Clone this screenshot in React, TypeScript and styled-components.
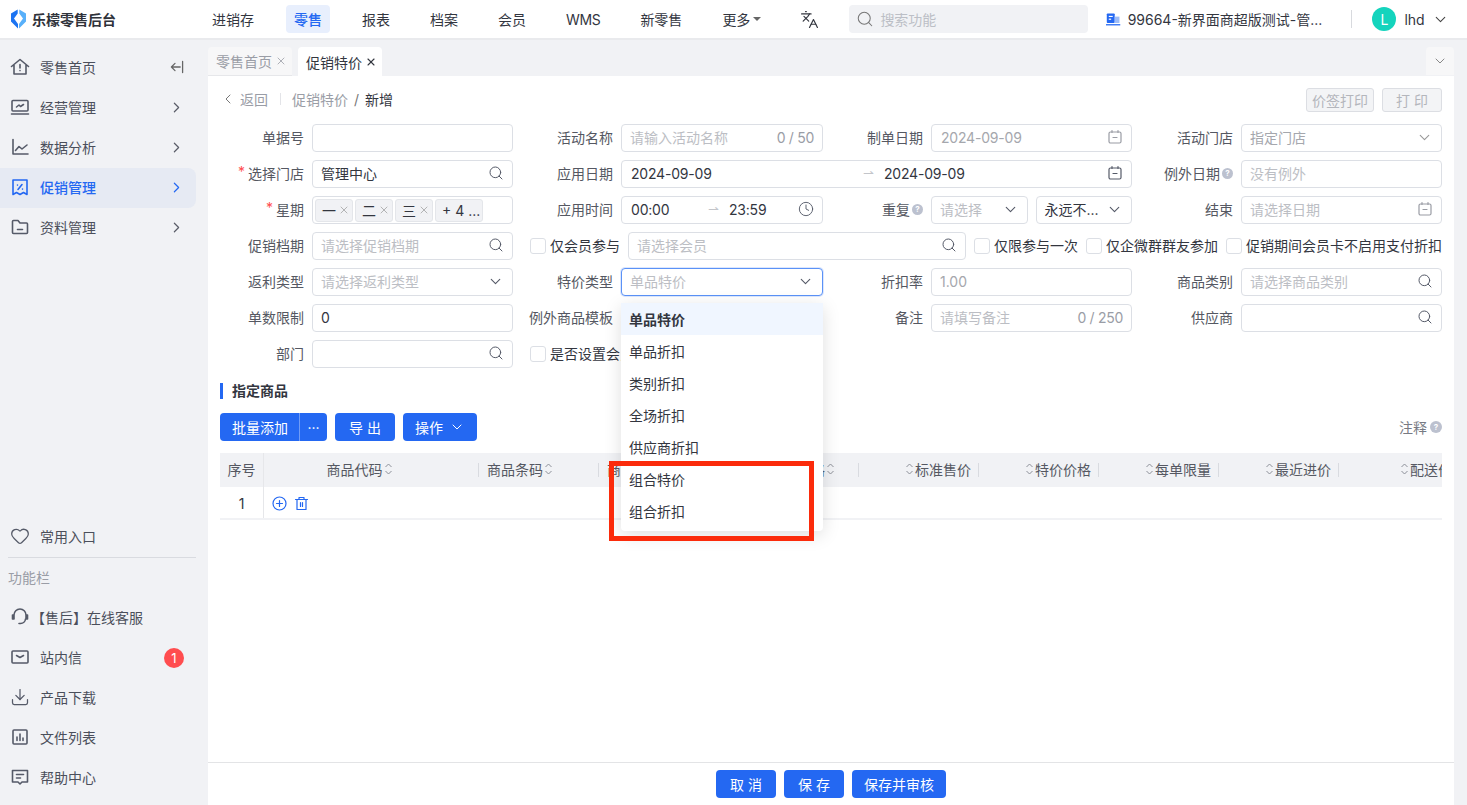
import React from 'react'
import styled, { createGlobalStyle } from 'styled-components'
import { Search, ChevronDown, ChevronRight, ChevronLeft, X, Clock, Languages, Heart, Download } from 'lucide-react'

const GlobalStyle = createGlobalStyle`
  html, body { margin: 0; padding: 0; height: 100%; }
  body {
    font-family: "Inter", "Noto Sans CJK SC", sans-serif;
    font-size: 14px;
    color: #33363f;
    background: #f1f2f5;
    overflow: hidden;
  }
  * { box-sizing: border-box; }
`

const BLUE = '#2468f2'

const Page = styled.div`
  position: relative;
  width: 100%;
  height: 100vh;
  display: flex;
  flex-direction: column;
  overflow: hidden;
`

/* ---------- top bar ---------- */

const TopBar = styled.header`
  flex: 0 0 40px;
  display: flex;
  align-items: center;
  background: #fff;
  border-bottom: 2px solid #e9eaed;
`

const Brand = styled.div`
  flex: 0 0 204px;
  display: flex;
  align-items: center;
  gap: 6px;
  padding-left: 11px;
  font-weight: 600;
  color: #2f323a;
`

const Nav = styled.nav`
  display: flex;
  gap: 24px;
`

const NavItem = styled.div<{ $active?: boolean; $latin?: boolean }>`
  height: 28px;
  padding: 0 8px;
  display: flex;
  align-items: center;
  gap: 3px;
  border-radius: 4px;
  letter-spacing: ${p => (p.$latin ? '-.35px' : 'normal')};
  color: ${p => (p.$active ? BLUE : '#33363f')};
  background: ${p => (p.$active ? '#e8effd' : 'transparent')};
  font-weight: ${p => (p.$active ? 500 : 400)};
`

const Caret = styled.span`
  width: 0;
  height: 0;
  border-left: 4px solid transparent;
  border-right: 4px solid transparent;
  border-top: 4px solid #666;
`

const LangButton = styled.div`
  margin-left: 31px;
  display: flex;
  color: #33363f;
`

const SearchBox = styled.div`
  margin-left: 30px;
  width: 239px;
  height: 28px;
  padding-left: 7px;
  display: flex;
  align-items: center;
  gap: 6px;
  border-radius: 4px;
  background: #f1f2f5;
  color: #bcbfc6;
  svg { color: #777; }
`

const StoreInfo = styled.div`
  margin-left: 18px;
  width: 216px;
  display: flex;
  align-items: center;
  gap: 7px;
  white-space: nowrap;
  color: #33363f;
`

const HeadSep = styled.span`
  margin-left: 29px;
  width: 1px;
  height: 18px;
  background: #d8dade;
`

const Avatar = styled.div`
  margin-left: 20px;
  width: 24px;
  height: 24px;
  border-radius: 50%;
  background: #14d4bd;
  color: #fff;
  display: flex;
  align-items: center;
  justify-content: center;
`

const UserName = styled.span`
  margin-left: 8px;
  margin-right: 7px;
`

/* ---------- sidebar ---------- */

const Body = styled.div`
  flex: 1;
  min-height: 0;
  display: flex;
`

const Sidebar = styled.aside`
  flex: 0 0 208px;
  padding: 8px 12px 7px 0;
  display: flex;
  flex-direction: column;
  background: #f1f2f5;
`

const SideBottom = styled.div`
  margin-top: auto;
`

const SideItem = styled.div<{ $active?: boolean; $tight?: boolean }>`
  height: 40px;
  padding: 0 11px 2px 10px;
  display: flex;
  align-items: center;
  gap: ${p => (p.$tight ? '1px' : '10px')};
  border-radius: 0 8px 8px 0;
  color: ${p => (p.$active ? BLUE : '#4b4f5b')};
  background: ${p => (p.$active ? '#e6eaf3' : 'transparent')};
  font-weight: ${p => (p.$active ? 500 : 400)};
  white-space: nowrap;
  & > svg { flex: none; }
`

const SideLabel = styled.span`
  flex: 1;
`

const SideRule = styled.div`
  margin-left: 8px;
  height: 1px;
  background: #d9dbe0;
`

const SideHeading = styled.div`
  height: 40px;
  padding: 0 0 2px 8px;
  display: flex;
  align-items: center;
  color: #9a9da6;
`

const Badge = styled.span`
  width: 20px;
  height: 20px;
  margin: 2px 1px 0 0;
  border-radius: 50%;
  background: #ff4d4f;
  color: #fff;
  font-size: 13px;
  display: flex;
  align-items: center;
  justify-content: center;
`

/* ---------- tabs ---------- */

const Main = styled.main`
  flex: 1;
  min-width: 0;
  display: flex;
  flex-direction: column;
`

const TabBar = styled.div`
  flex: 0 0 36px;
  padding-top: 7px;
  padding-right: 13px;
  display: flex;
  gap: 6px;
  background: #f1f2f5;
`

const Tab = styled.div<{ $active?: boolean }>`
  width: 84px;
  height: 29px;
  padding-left: 8px;
  display: flex;
  align-items: center;
  gap: 3px;
  border-radius: 4px 4px 0 0;
  white-space: nowrap;
  background: ${p => (p.$active ? '#fff' : '#f7f7f8')};
  color: ${p => (p.$active ? '#33363f' : '#9a9da6')};
  border-bottom: ${p => (p.$active ? 'none' : '1px solid #e6e7ea')};
`

const TabMore = styled.div`
  margin-left: auto;
  width: 28px;
  height: 28px;
  display: flex;
  align-items: center;
  justify-content: center;
  border-radius: 4px 4px 0 0;
  background: #f7f7f8;
  color: #888;
`

/* ---------- content ---------- */

const Content = styled.section`
  flex: 1;
  min-height: 0;
  margin-right: 13px;
  display: flex;
  flex-direction: column;
  background: #fff;
`

const Scroll = styled.div`
  flex: 1;
  min-height: 0;
  padding: 0 12px;
`

const CrumbBar = styled.div`
  height: 48px;
  display: flex;
  align-items: center;
`

const CrumbText = styled.div`
  padding-bottom: 2px;
  display: flex;
  align-items: center;
`

const Crumb = styled.span<{ $current?: boolean }>`
  color: ${p => (p.$current ? '#33363f' : '#9a9da6')};
`

const CrumbBack = styled.div`
  display: flex;
  align-items: center;
  gap: 4px;
  color: #9a9da6;
`

const CrumbSep = styled.span`
  margin: 0 11px 0 12px;
  width: 1px;
  height: 12px;
  background: #e3e4e8;
`

const CrumbSlash = styled.span`
  margin: 0 6px;
  color: #777;
`

const CrumbActions = styled.div`
  margin-left: auto;
  display: flex;
  gap: 8px;
`

const GhostButton = styled.div<{ $w: number }>`
  width: ${p => p.$w}px;
  height: 24px;
  display: flex;
  align-items: center;
  justify-content: center;
  border: 1px solid #dcdee3;
  border-radius: 3px;
  background: #f3f4f6;
  color: #b4b6bc;
  white-space: nowrap;
`

const FormGrid = styled.div`
  display: grid;
  grid-template-columns: 92px 201px 108px 202px 108px 201px 109px 201px;
  grid-auto-rows: 28px;
  row-gap: 8px;
`

const Label = styled.div`
  padding: 0 8px 2px 0;
  display: flex;
  align-items: center;
  justify-content: flex-end;
  gap: 2px;
  white-space: nowrap;
  color: #555862;
`

const Star = styled.span`
  color: #ff4d4f;
  margin-right: 1px;
  align-self: flex-start;
  padding-top: 3px;
`

const Help = styled.span<{ $size?: number }>`
  width: ${p => p.$size ?? 11}px;
  height: ${p => p.$size ?? 11}px;
  border-radius: 50%;
  background: #bcc1cf;
  color: #fff;
  font-size: 8px;
  font-weight: 700;
  display: inline-flex;
  align-items: center;
  justify-content: center;
`

const Field = styled.div<{ $span?: number; $focused?: boolean }>`
  position: relative;
  grid-column: span ${p => p.$span ?? 1};
  min-width: 0;
  height: 28px;
  padding: 0 8px 2px 8px;
  display: flex;
  align-items: center;
  border: 1px solid ${p => (p.$focused ? '#5b92f7' : '#dcdfe5')};
  border-radius: 4px;
  background: #fff;
  color: #555;
  box-shadow: ${p => (p.$focused ? '0 0 0 1px rgba(36,104,242,.16)' : 'none')};
  white-space: nowrap;
  & > svg { flex: none; }
`

const Value = styled.span<{ $tone?: 'hint' | 'muted'; $width?: number }>`
  flex: ${p => (p.$width ? `0 0 ${p.$width}px` : '1')};
  min-width: 0;
  color: ${p => (p.$tone === 'hint' ? '#bcbec4' : p.$tone === 'muted' ? '#a5a7ad' : '#33363f')};
`

const DateValue = styled(Value)`
  padding-left: 1px;
  letter-spacing: -.2px;
`

const Counter = styled.span`
  color: #9a9da6;
  letter-spacing: -.3px;
`

const Arrow = styled.span`
  flex: none;
  width: 22px;
  padding-left: 2px;
  color: #c3c5ca;
  font-size: 13px;
`

const SplitField = styled.div`
  min-width: 0;
  display: flex;
  gap: 8px;
  & > * { flex: 1; }
`

const TagField = styled(Field)`
  padding: 0 2px;
  gap: 2px;
`

const Tag = styled.span`
  height: 23px;
  padding: 0 2px 0 6px;
  display: flex;
  align-items: center;
  gap: 2px;
  border: 1px solid #e4e6ea;
  border-radius: 3px;
  background: #f1f2f5;
  color: #33363f;
  svg { color: #888; }
`

const CheckRow = styled.div`
  grid-column: 3 / -1;
  padding: 0 0 2px 17px;
  display: flex;
  align-items: center;
  gap: 8px;
  white-space: nowrap;
`

const CheckItem = styled.label`
  display: flex;
  align-items: center;
  gap: 4px;
  color: #33363f;
`

const Box = styled.span`
  width: 16px;
  height: 16px;
  margin-top: 2px;
  border: 1px solid #dcdfe5;
  border-radius: 3px;
  background: #fff;
`

const MemberField = styled(Field)`
  flex: 1;
  margin: 2px 0 0 0;
`

const Menu = styled.ul`
  position: absolute;
  z-index: 5;
  left: -1px;
  right: -1px;
  top: 34px;
  margin: 0;
  padding: 0 0 4px;
  list-style: none;
  border-radius: 0 0 4px 4px;
  background: #fff;
  box-shadow: 0 4px 18px rgba(0, 0, 0, .13);
`

const MenuItem = styled.li<{ $selected?: boolean }>`
  height: 32px;
  padding-left: 8px;
  display: flex;
  align-items: center;
  color: #33363f;
  background: ${p => (p.$selected ? '#f0f6ff' : '#fff')};
  font-weight: ${p => (p.$selected ? 600 : 400)};
`

const SectionTitle = styled.h3`
  margin: 15px 0 14px;
  height: 16px;
  padding: 0 0 3px 9px;
  display: flex;
  align-items: center;
  border-left: 3px solid ${BLUE};
  font-size: 14px;
  font-weight: 600;
  color: #33363f;
`

const Toolbar = styled.div`
  height: 28px;
  margin-bottom: 12px;
  display: flex;
  align-items: center;
  gap: 8px;
`

const PrimaryButton = styled.div<{ $min?: number }>`
  min-width: ${p => p.$min ?? 0}px;
  height: 28px;
  padding: 0 12px;
  display: flex;
  align-items: center;
  justify-content: center;
  gap: 6px;
  border-radius: 4px;
  background: ${BLUE};
  color: #fff;
  white-space: nowrap;
`

const ButtonGroup = styled.div`
  display: flex;
  border-radius: 4px;
  overflow: hidden;
  & > div { border-radius: 0; }
  & > div:first-child { padding: 0 11px 0 12px; width: 79px; }
  & > div + div { border-left: 1px solid rgba(255, 255, 255, .35); padding: 0; width: 28px; }
`

const NoteLink = styled.div`
  margin-left: auto;
  display: flex;
  align-items: center;
  gap: 3px;
  color: #777a83;
`

/* ---------- table ---------- */

const TableWrap = styled.div`
  width: 1222px;
  overflow: hidden;
`

const HeadRow = styled.div`
  display: flex;
  height: 34px;
  background: #f1f2f5;
`

const HeadCell = styled.div<{ $w: number; $align: string; $pl?: number; $pr?: number; $line?: boolean }>`
  position: relative;
  flex: 0 0 ${p => p.$w}px;
  padding: 0 ${p => p.$pr ?? 8}px 2px ${p => p.$pl ?? 8}px;
  display: flex;
  align-items: center;
  justify-content: ${p => p.$align};
  gap: 1px;
  color: #555862;
  white-space: nowrap;
  &::after {
    content: '';
    display: ${p => (p.$line ? 'block' : 'none')};
    position: absolute;
    right: 0;
    top: 10px;
    width: 1px;
    height: 14px;
    background: #d9dbe0;
  }
`

const IndexHead = styled(HeadCell)`
  border-right: 1px solid #e6e7ea;
  padding: 0 0 2px;
`

const DataRow = styled.div`
  display: flex;
  height: 33px;
  border-bottom: 2px solid #f1f2f5;
`

const IndexCell = styled.div`
  flex: 0 0 44px;
  padding-top: 1px;
  display: flex;
  align-items: center;
  justify-content: center;
  border-right: 1px solid #e6e7ea;
  color: #33363f;
`

const ActionCell = styled.div`
  padding: 2px 0 0 8px;
  display: flex;
  align-items: center;
  gap: 7px;
  color: ${BLUE};
`

const Footer = styled.footer`
  flex: 0 0 43px;
  display: flex;
  align-items: center;
  justify-content: center;
  gap: 8px;
  border-top: 1px solid #e3e4e6;
`

const RedFrame = styled.div`
  position: absolute;
  z-index: 6;
  left: 609px;
  top: 461px;
  width: 205px;
  height: 80px;
  border: 5px solid #fb2b0b;
  pointer-events: none;
`

/* ---------- drawings ---------- */

const Ico: React.FC<{ children: React.ReactNode; size?: number; color?: string }> = ({ children, size = 20, color = '#555a68' }) => (
  <svg width={size} height={size} viewBox="0 0 20 20" fill="none" stroke={color} strokeWidth="1.6" strokeLinecap="round" strokeLinejoin="round">
    {children}
  </svg>
)

const Logo = () => (
  <svg width="15" height="20" viewBox="0 0 15 20">
    <path d="M6.7 0.5 V4.6 L3 9.6 L7 15 V19.5 L0 12.5 V4.6 Z" fill="#1c74f2" />
    <path d="M8.3 0.5 L15 4.6 V12.5 L8 19.5 V15 L12 9.6 L8.3 4.6 Z" fill="#58b0fa" />
  </svg>
)

const StoreIcon = () => (
  <svg width="18" height="18" viewBox="0 0 18 18">
    <rect x="1" y="2" width="10" height="12" rx="1" fill="#2468f2" />
    <rect x="11" y="6" width="6" height="8" fill="#9dbcf8" />
    <rect x="3.5" y="5" width="5" height="1.5" fill="#fff" />
    <rect x="3.5" y="8.5" width="3" height="1.5" fill="#fff" />
    <rect x="0" y="15.5" width="18" height="1.6" fill="#2468f2" />
  </svg>
)

const CalendarIcon: React.FC<{ color?: string }> = ({ color = '#999ca4' }) => (
  <svg width="16" height="16" viewBox="0 0 16 16" fill="none" stroke={color} strokeWidth="1.2" strokeLinecap="round">
    <rect x="2" y="3" width="12" height="11" rx="1.5" />
    <path d="M5 1.5 V3.5 M11 1.5 V3.5 M6 8.5 H10" />
  </svg>
)

const SortIcon = () => (
  <svg width="9" height="14" viewBox="0 0 9 14" fill="none" stroke="#8d9099" strokeWidth="1">
    <path d="M1.5 5 L4.5 2 L7.5 5 M1.5 9 L4.5 12 L7.5 9" />
  </svg>
)

const columns = [
  { title: '商品代码', w: 215, align: 'center', pr: 32, sort: 'after' },
  { title: '商品条码', w: 120, align: 'flex-start', sort: 'after' },
  { title: '商品名称', w: 110, align: 'flex-start', sort: 'after' },
  { title: '商品规格', w: 150, align: 'center', pl: 44, sort: 'after' },
  { title: '标准售价', w: 120, align: 'flex-end', sort: 'before' },
  { title: '特价价格', w: 120, align: 'flex-end', sort: 'before' },
  { title: '每单限量', w: 120, align: 'flex-end', sort: 'before' },
  { title: '最近进价', w: 120, align: 'flex-end', sort: 'before' },
  { title: '配送价格', w: 135, align: 'flex-end', sort: 'before' },
]

const menuOptions = ['单品特价', '单品折扣', '类别折扣', '全场折扣', '供应商折扣', '组合特价', '组合折扣']

const SearchIcon = () => <Search size={16} strokeWidth={1.5} color="#555a68" />
const SelectIcon: React.FC<{ color?: string }> = ({ color = '#555a68' }) => <ChevronDown size={17} strokeWidth={1.6} color={color} />
const SideArrow: React.FC<{ color?: string }> = ({ color = '#5a5d68' }) => <ChevronRight size={17} strokeWidth={1.7} color={color} />

const App: React.FC = () => (
  <Page>
    <GlobalStyle />
    <TopBar>
      <Brand><Logo />乐檬零售后台</Brand>
      <Nav>
        <NavItem>进销存</NavItem>
        <NavItem $active>零售</NavItem>
        <NavItem>报表</NavItem>
        <NavItem>档案</NavItem>
        <NavItem>会员</NavItem>
        <NavItem $latin>WMS</NavItem>
        <NavItem>新零售</NavItem>
        <NavItem>更多<Caret /></NavItem>
      </Nav>
      <LangButton><Languages size={19} strokeWidth={1.5} /></LangButton>
      <SearchBox><Search size={18} strokeWidth={1.4} />搜索功能</SearchBox>
      <StoreInfo><StoreIcon />99664-新界面商超版测试-管...</StoreInfo>
      <HeadSep />
      <Avatar>L</Avatar>
      <UserName>lhd</UserName>
      <ChevronDown size={17} strokeWidth={1.5} color="#444" />
    </TopBar>

    <Body>
      <Sidebar>
        <SideItem>
          <Ico><path d="M1.5 9.5 L10 2.5 L18.5 9.5 M4 8 V17 H16 V8 M10 7.5 V11 M10 13.5 V13.6" /></Ico>
          <SideLabel>零售首页</SideLabel>
          <Ico size={16} color="#666"><path d="M17 3 V17 M14 10 H3 M7.5 5.5 L3 10 L7.5 14.5" /></Ico>
        </SideItem>
        <SideItem>
          <Ico><rect x="2" y="3.5" width="16" height="10.5" rx="1" /><path d="M1.5 17 H18.5 M6.5 10 L9 8 L10.5 9.5 L13.5 7.5" /></Ico>
          <SideLabel>经营管理</SideLabel>
          <SideArrow />
        </SideItem>
        <SideItem>
          <Ico><path d="M3 2.5 V17 H18 M5.5 13.5 L9 9.5 L12 12 L17 8" /></Ico>
          <SideLabel>数据分析</SideLabel>
          <SideArrow />
        </SideItem>
        <SideItem $active>
          <Ico color={BLUE}><path d="M3 3 H17 V17.5 L13.5 15.5 L10 17.5 L6.5 15.5 L3 17.5 Z M12 7.5 L8 12.5 M7.5 8 V8.1 M12.5 12 V12.1" /></Ico>
          <SideLabel>促销管理</SideLabel>
          <SideArrow color={BLUE} />
        </SideItem>
        <SideItem>
          <Ico><path d="M2.5 4.5 a1 1 0 0 1 1 -1 H8 L10 6 H16.5 a1 1 0 0 1 1 1 V15.5 a1 1 0 0 1 -1 1 H3.5 a1 1 0 0 1 -1 -1 Z M7.5 12.5 H12.5" /></Ico>
          <SideLabel>资料管理</SideLabel>
          <SideArrow />
        </SideItem>

        <SideBottom>
          <SideItem>
            <Heart size={20} strokeWidth={1.5} color="#555a68" />
            <SideLabel>常用入口</SideLabel>
          </SideItem>
          <SideRule />
          <SideHeading>功能栏</SideHeading>
          <SideItem $tight>
            <Ico><path d="M4 8 a6 6 0 0 1 12 0 M4 8 H2.5 V12 H4 Z M16 8 H17.5 V12 H16 Z M15.5 12 a5 5 0 0 1 -5 4.5 H9" /></Ico>
            <SideLabel>【售后】在线客服</SideLabel>
          </SideItem>
          <SideItem>
            <Ico><rect x="2" y="4" width="16" height="12" rx="1" /><path d="M6.5 8.5 L10 10.5 L13.5 8.5" /></Ico>
            <SideLabel>站内信</SideLabel>
            <Badge>1</Badge>
          </SideItem>
          <SideItem>
            <Download size={20} strokeWidth={1.5} color="#555a68" />
            <SideLabel>产品下载</SideLabel>
          </SideItem>
          <SideItem>
            <Ico><rect x="3" y="3" width="14" height="14" rx="1" /><path d="M7 13.5 V10 M10 13.5 V7 M13 13.5 V11" /></Ico>
            <SideLabel>文件列表</SideLabel>
          </SideItem>
          <SideItem>
            <Ico><path d="M2.5 3.5 H17.5 V15 H12 L10 17 L8 15 H2.5 Z M6.5 7.5 H13.5 M6.5 11 H10.5" /></Ico>
            <SideLabel>帮助中心</SideLabel>
          </SideItem>
        </SideBottom>
      </Sidebar>

      <Main>
        <TabBar>
          <Tab>零售首页<X size={12} strokeWidth={1.6} /></Tab>
          <Tab $active>促销特价<X size={12} strokeWidth={2.2} /></Tab>
          <TabMore><ChevronDown size={16} strokeWidth={1.5} /></TabMore>
        </TabBar>

        <Content>
          <Scroll>
            <CrumbBar>
              <CrumbText>
                <CrumbBack><ChevronLeft size={16} strokeWidth={1.5} color="#777" />返回</CrumbBack>
                <CrumbSep />
                <Crumb>促销特价</Crumb>
                <CrumbSlash>/</CrumbSlash>
                <Crumb $current>新增</Crumb>
              </CrumbText>
              <CrumbActions>
                <GhostButton $w={68}>价签打印</GhostButton>
                <GhostButton $w={60}>打 印</GhostButton>
              </CrumbActions>
            </CrumbBar>

            <FormGrid>
              <Label>单据号</Label>
              <Field />
              <Label>活动名称</Label>
              <Field><Value $tone="hint">请输入活动名称</Value><Counter>0 / 50</Counter></Field>
              <Label>制单日期</Label>
              <Field><DateValue $tone="muted">2024-09-09</DateValue><CalendarIcon /></Field>
              <Label>活动门店</Label>
              <Field><Value $tone="muted">指定门店</Value><SelectIcon color="#999" /></Field>

              <Label><Star>*</Star>选择门店</Label>
              <Field><Value>管理中心</Value><SearchIcon /></Field>
              <Label>应用日期</Label>
              <Field $span={3}>
                <DateValue $width={231}>2024-09-09</DateValue>
                <Arrow>⇀</Arrow>
                <DateValue>2024-09-09</DateValue>
                <CalendarIcon color="#555a68" />
              </Field>
              <Label>例外日期<Help>?</Help></Label>
              <Field><Value $tone="hint">没有例外</Value></Field>

              <Label><Star>*</Star>星期</Label>
              <TagField>
                <Tag>一<X size={12} strokeWidth={1.2} /></Tag>
                <Tag>二<X size={12} strokeWidth={1.2} /></Tag>
                <Tag>三<X size={12} strokeWidth={1.2} /></Tag>
                <Tag>+ 4 ...</Tag>
              </TagField>
              <Label>应用时间</Label>
              <Field>
                <DateValue $width={76}>00:00</DateValue>
                <Arrow>⇀</Arrow>
                <DateValue>23:59</DateValue>
                <Clock size={16} strokeWidth={1.4} color="#555a68" />
              </Field>
              <Label>重复<Help>?</Help></Label>
              <SplitField>
                <Field><Value $tone="hint">请选择</Value><SelectIcon /></Field>
                <Field><Value>永远不...</Value><SelectIcon /></Field>
              </SplitField>
              <Label>结束</Label>
              <Field><Value $tone="hint">请选择日期</Value><CalendarIcon /></Field>

              <Label>促销档期</Label>
              <Field><Value $tone="hint">请选择促销档期</Value><SearchIcon /></Field>
              <CheckRow>
                <CheckItem><Box />仅会员参与</CheckItem>
                <MemberField><Value $tone="hint">请选择会员</Value><SearchIcon /></MemberField>
                <CheckItem><Box />仅限参与一次</CheckItem>
                <CheckItem><Box />仅企微群群友参加</CheckItem>
                <CheckItem><Box />促销期间会员卡不启用支付折扣</CheckItem>
              </CheckRow>

              <Label>返利类型</Label>
              <Field><Value $tone="hint">请选择返利类型</Value><SelectIcon /></Field>
              <Label>特价类型</Label>
              <Field $focused>
                <Value $tone="hint">单品特价</Value>
                <SelectIcon />
                <Menu>
                  {menuOptions.map((option, i) => (
                    <MenuItem key={option} $selected={i === 0}>{option}</MenuItem>
                  ))}
                </Menu>
              </Field>
              <Label>折扣率</Label>
              <Field><Value $tone="muted">1.00</Value></Field>
              <Label>商品类别</Label>
              <Field><Value $tone="hint">请选择商品类别</Value><SearchIcon /></Field>

              <Label>单数限制</Label>
              <Field><Value>0</Value></Field>
              <Label>例外商品模板</Label>
              <Field />
              <Label>备注</Label>
              <Field><Value $tone="hint">请填写备注</Value><Counter>0 / 250</Counter></Field>
              <Label>供应商</Label>
              <Field><Value /><SearchIcon /></Field>

              <Label>部门</Label>
              <Field><Value /><SearchIcon /></Field>
              <CheckRow>
                <CheckItem><Box />是否设置会员价</CheckItem>
              </CheckRow>
            </FormGrid>

            <SectionTitle>指定商品</SectionTitle>

            <Toolbar>
              <ButtonGroup>
                <PrimaryButton>批量添加</PrimaryButton>
                <PrimaryButton>···</PrimaryButton>
              </ButtonGroup>
              <PrimaryButton $min={60}>导 出</PrimaryButton>
              <PrimaryButton>操作<ChevronDown size={16} strokeWidth={1.5} /></PrimaryButton>
              <NoteLink>注释<Help $size={12}>?</Help></NoteLink>
            </Toolbar>

            <TableWrap>
              <HeadRow>
                <IndexHead $w={44} $align="center">序号</IndexHead>
                {columns.map(col => (
                  <HeadCell key={col.title} $w={col.w} $align={col.align} $pl={col.pl} $pr={col.pr} $line>
                    {col.sort === 'before' && <SortIcon />}
                    {col.title}
                    {col.sort === 'after' && <SortIcon />}
                  </HeadCell>
                ))}
              </HeadRow>
              <DataRow>
                <IndexCell>1</IndexCell>
                <ActionCell>
                  <svg width="15" height="15" viewBox="0 0 15 15" fill="none" stroke="currentColor" strokeWidth="1.2" strokeLinecap="round">
                    <circle cx="7.5" cy="7.5" r="6.5" />
                    <path d="M7.5 4.5 V10.5 M4.5 7.5 H10.5" />
                  </svg>
                  <svg width="15" height="15" viewBox="0 0 15 15" fill="none" stroke="currentColor" strokeWidth="1.2" strokeLinecap="round" strokeLinejoin="round">
                    <path d="M1.5 3.5 H13.5 M5 3.5 V1.5 H10 V3.5 M3 3.5 V13.5 H12 V3.5 M6.5 6.5 V10.5 M8.5 6.5 V10.5" />
                  </svg>
                </ActionCell>
              </DataRow>
            </TableWrap>
          </Scroll>

          <Footer>
            <PrimaryButton $min={60}>取 消</PrimaryButton>
            <PrimaryButton $min={60}>保 存</PrimaryButton>
            <PrimaryButton>保存并审核</PrimaryButton>
          </Footer>
        </Content>
      </Main>
    </Body>
    <RedFrame />
  </Page>
)

export default App
